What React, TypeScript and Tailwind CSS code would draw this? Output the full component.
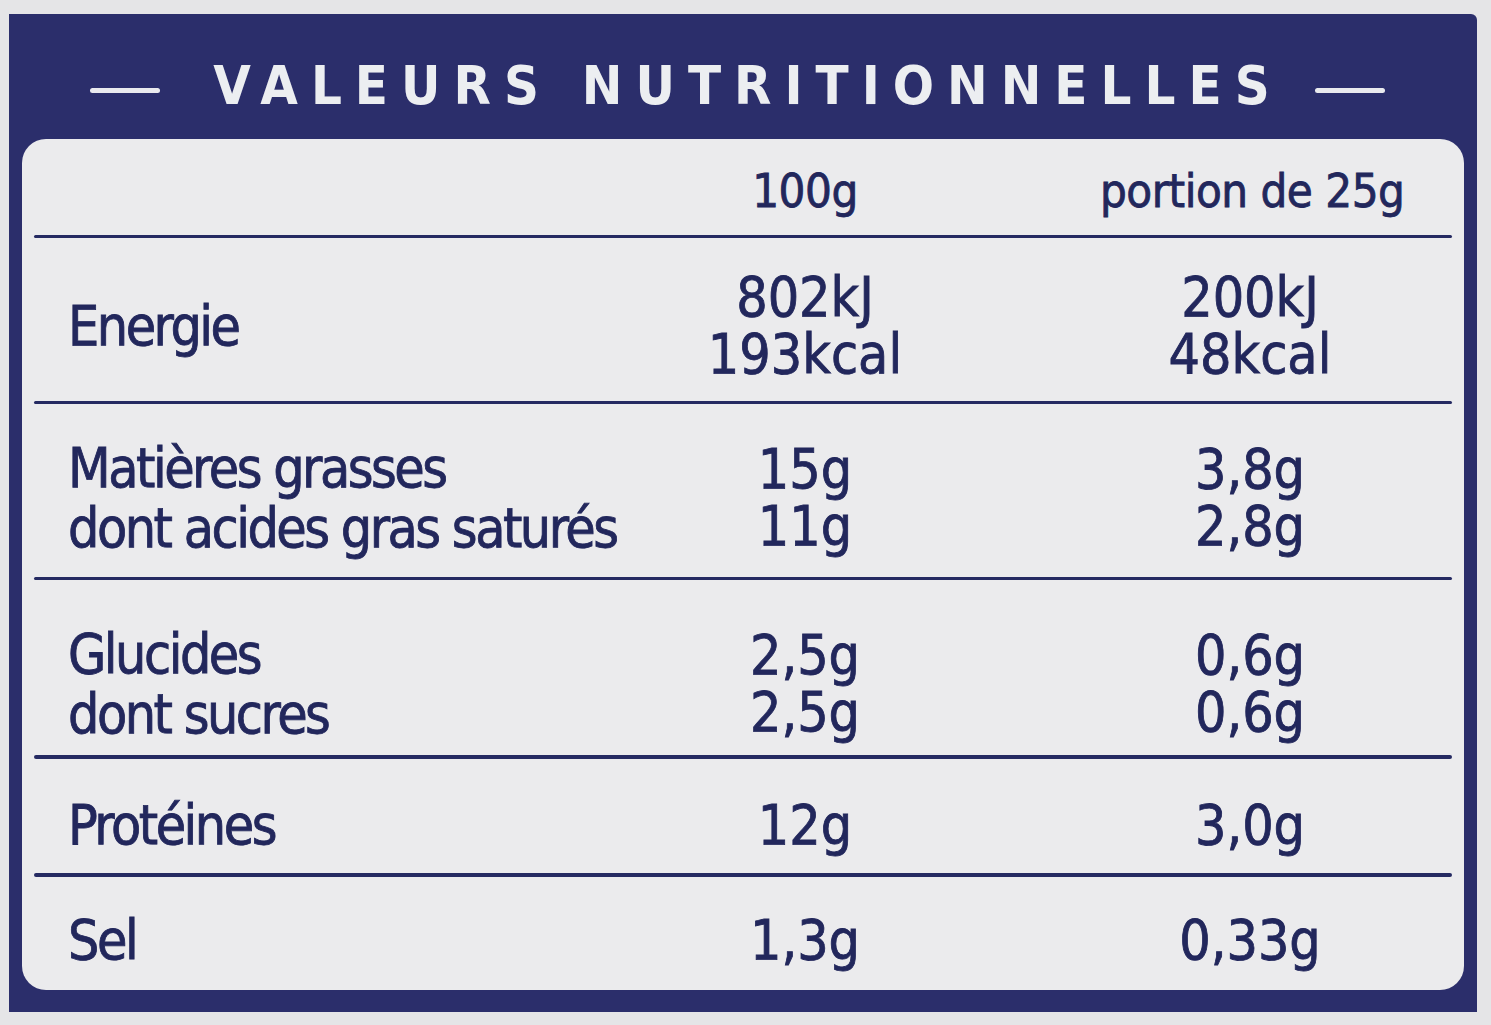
const font = "font-['Liberation_Sans_Narrow','DejaVu_Sans_Condensed',sans-serif]";

type Row = {
  label: string[];
  per100: string[];
  portion: string[];
  h: string;
  pt: string;
};

const rows: Row[] = [
  { label: ["Energie"], per100: ["802kJ", "193kcal"], portion: ["200kJ", "48kcal"], h: "h-[163px]", pt: "pt-[12px]" },
  {
    label: ["Matières grasses", "dont acides gras saturés"],
    per100: ["15g", "11g"],
    portion: ["3,8g", "2,8g"],
    h: "h-[173px]",
    pt: "pt-[14px]",
  },
  { label: ["Glucides", "dont sucres"], per100: ["2,5g", "2,5g"], portion: ["0,6g", "0,6g"], h: "h-[175px]", pt: "pt-[32px]" },
  { label: ["Protéines"], per100: ["12g"], portion: ["3,0g"], h: "h-[114px]", pt: "pt-[18px]" },
  { label: ["Sel"], per100: ["1,3g"], portion: ["0,33g"], h: "h-[113px]", pt: "pt-[13px]" },
];

const Lines = ({ items }: { items: string[] }) => (
  <div className="flex flex-col items-center">
    {items.map((t, i) => (
      <div key={i} className="h-[57px] leading-[57px] overflow-visible">
        {t}
      </div>
    ))}
  </div>
);

const Divider = ({ thick }: { thick?: boolean }) => (
  <div className={thick ? "h-[4px] bg-[#252a62] rounded-full" : "h-[3px] bg-[#252a62] rounded-full"} />
);

export default function App() {
  return (
    <div className="w-[1491px] h-[1025px] overflow-hidden bg-[#e5e5e7] pt-[14px] pl-[9px] pr-[14px]">
      <div className="h-[998px] bg-[#2b2e6b] rounded-tr-[6px] px-[13px] pb-[22px] flex flex-col">
        {/* title band */}
        <div className="h-[126px] flex items-center justify-center pt-[18px] pr-[11px]">
          <div className="mt-[10px] w-[70px] h-[5px] rounded-full bg-[#e9eaee]" />
          <h1
            className={cn(
              font,
              "ml-[53px] mr-[32px] text-[54px] font-bold leading-none tracking-[13px] text-[#eceef1]",
            )}
          >
            VALEURS NUTRITIONNELLES
          </h1>
          <div className="mt-[10px] w-[70px] h-[5px] rounded-full bg-[#e9eaee]" />
        </div>

        {/* white panel */}
        <div
          className={cn(
            font,
            "flex-1 flex flex-col rounded-[24px] bg-[#ebebed] px-[12px] text-[55px] text-[#22275c] [-webkit-text-stroke:0.8px_#22275c]",
          )}
        >
          <div className="h-[96px] pt-[8px] pl-[34px] grid grid-cols-[587px_300px_145px_300px] items-center text-[47px] tracking-[-0.5px]">
            <div />
            <div className="text-center">100g</div>
            <div />
            <div className="text-center whitespace-nowrap">portion de 25g</div>
          </div>
          <Divider />

          {rows.map((r, i) => (
            <div key={r.label[0]}>
              <div className={cn(r.h, r.pt, "pl-[34px] grid grid-cols-[587px_300px_145px_300px] items-center")}>
                <div className="flex flex-col whitespace-nowrap tracking-[-2.5px]">
                  {r.label.map((l) => (
                    <div key={l} className="h-[60px] leading-[60px]">
                      {l}
                    </div>
                  ))}
                </div>
                <Lines items={r.per100} />
                <div />
                <Lines items={r.portion} />
              </div>
              {i < rows.length - 1 && <Divider thick={i >= 2} />}
            </div>
          ))}
        </div>
      </div>
    </div>
  );
}

function cn(...parts: string[]) {
  return parts.join(" ");
}
